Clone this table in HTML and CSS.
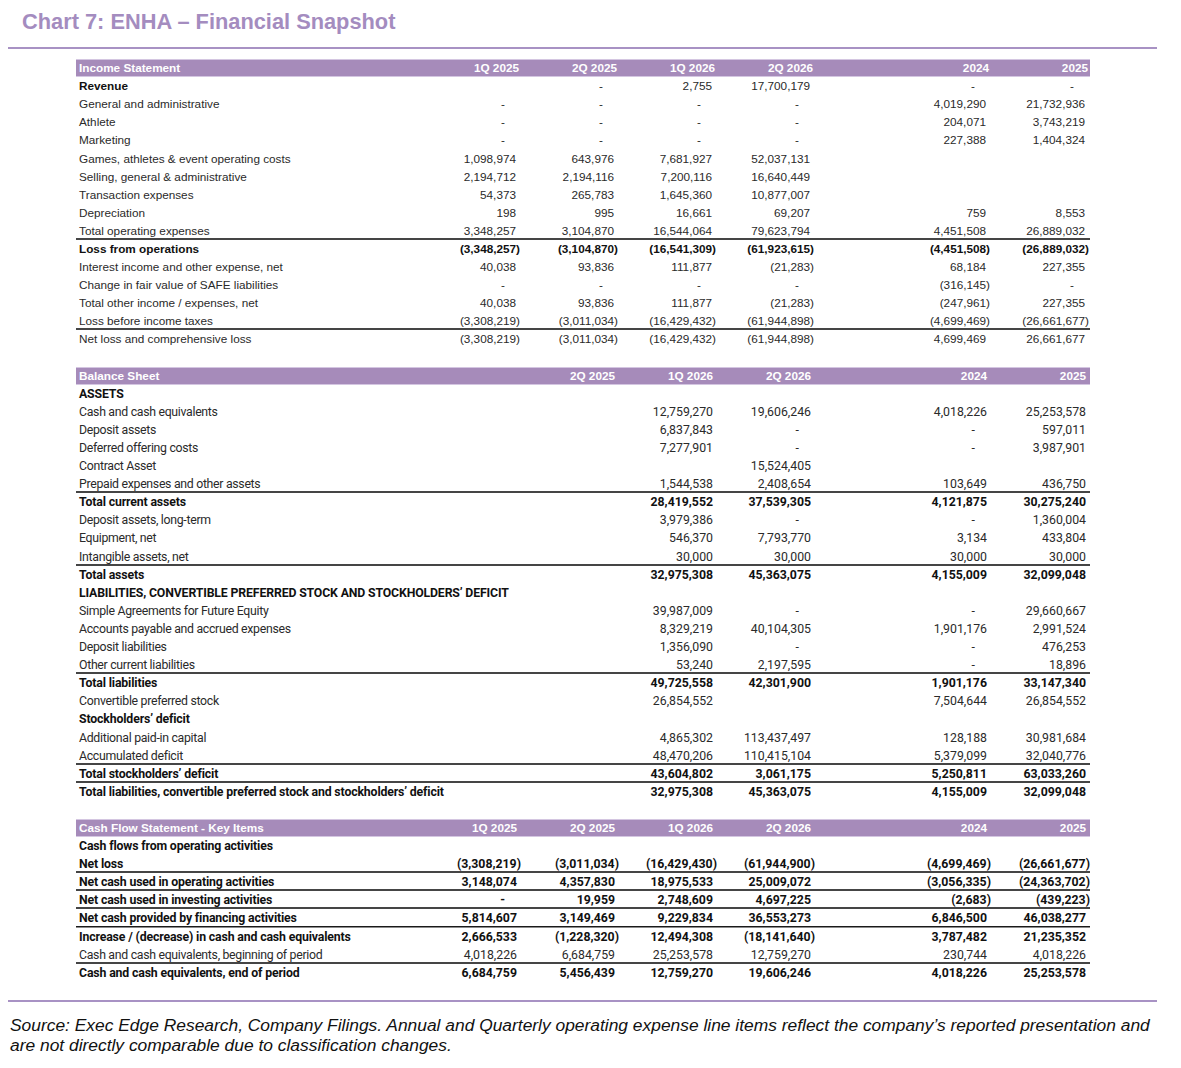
FILE: index.html
```html
<!DOCTYPE html>
<html lang="en">
<head>
<meta charset="utf-8">
<title>Chart 7: ENHA – Financial Snapshot</title>
<link rel="stylesheet" href="styles.css">
</head>
<body>
<div class="page">
  <h1 class="title">Chart 7: ENHA – Financial Snapshot</h1>
  <div class="rule"></div>

  <div class="fin">
    <section class="sect income">
      <div class="row head"><div class="lbl">Income Statement</div><div class="n">1Q 2025</div><div class="n">2Q 2025</div><div class="n">1Q 2026</div><div class="n">2Q 2026</div><div></div><div class="n">2024</div><div class="n">2025</div></div>
      <div class="row"><div class="lbl strong">Revenue</div><div class="n"></div><div class="n z">-</div><div class="n">2,755</div><div class="n">17,700,179</div><div></div><div class="n z">-</div><div class="n z">-</div></div>
      <div class="row"><div class="lbl">General and administrative</div><div class="n z">-</div><div class="n z">-</div><div class="n z">-</div><div class="n z">-</div><div></div><div class="n">4,019,290</div><div class="n">21,732,936</div></div>
      <div class="row"><div class="lbl">Athlete</div><div class="n z">-</div><div class="n z">-</div><div class="n z">-</div><div class="n z">-</div><div></div><div class="n">204,071</div><div class="n">3,743,219</div></div>
      <div class="row"><div class="lbl">Marketing</div><div class="n z">-</div><div class="n z">-</div><div class="n z">-</div><div class="n z">-</div><div></div><div class="n">227,388</div><div class="n">1,404,324</div></div>
      <div class="row"><div class="lbl">Games, athletes &amp; event operating costs</div><div class="n">1,098,974</div><div class="n">643,976</div><div class="n">7,681,927</div><div class="n">52,037,131</div><div></div><div class="n"></div><div class="n"></div></div>
      <div class="row"><div class="lbl">Selling, general &amp; administrative</div><div class="n">2,194,712</div><div class="n">2,194,116</div><div class="n">7,200,116</div><div class="n">16,640,449</div><div></div><div class="n"></div><div class="n"></div></div>
      <div class="row"><div class="lbl">Transaction expenses</div><div class="n">54,373</div><div class="n">265,783</div><div class="n">1,645,360</div><div class="n">10,877,007</div><div></div><div class="n"></div><div class="n"></div></div>
      <div class="row"><div class="lbl">Depreciation</div><div class="n">198</div><div class="n">995</div><div class="n">16,661</div><div class="n">69,207</div><div></div><div class="n">759</div><div class="n">8,553</div></div>
      <div class="row ul"><div class="lbl">Total operating expenses</div><div class="n">3,348,257</div><div class="n">3,104,870</div><div class="n">16,544,064</div><div class="n">79,623,794</div><div></div><div class="n">4,451,508</div><div class="n">26,889,032</div></div>
      <div class="row b"><div class="lbl">Loss from operations</div><div class="n m">(3,348,257)</div><div class="n m">(3,104,870)</div><div class="n m">(16,541,309)</div><div class="n m">(61,923,615)</div><div></div><div class="n m">(4,451,508)</div><div class="n m">(26,889,032)</div></div>
      <div class="row"><div class="lbl">Interest income and other expense, net</div><div class="n">40,038</div><div class="n">93,836</div><div class="n">111,877</div><div class="n m">(21,283)</div><div></div><div class="n">68,184</div><div class="n">227,355</div></div>
      <div class="row"><div class="lbl">Change in fair value of SAFE liabilities</div><div class="n z">-</div><div class="n z">-</div><div class="n z">-</div><div class="n z">-</div><div></div><div class="n m">(316,145)</div><div class="n z">-</div></div>
      <div class="row"><div class="lbl">Total other income / expenses, net</div><div class="n">40,038</div><div class="n">93,836</div><div class="n">111,877</div><div class="n m">(21,283)</div><div></div><div class="n m">(247,961)</div><div class="n">227,355</div></div>
      <div class="row ul"><div class="lbl">Loss before income taxes</div><div class="n m">(3,308,219)</div><div class="n m">(3,011,034)</div><div class="n m">(16,429,432)</div><div class="n m">(61,944,898)</div><div></div><div class="n m">(4,699,469)</div><div class="n m">(26,661,677)</div></div>
      <div class="row"><div class="lbl">Net loss and comprehensive loss</div><div class="n m">(3,308,219)</div><div class="n m">(3,011,034)</div><div class="n m">(16,429,432)</div><div class="n m">(61,944,898)</div><div></div><div class="n">4,699,469</div><div class="n">26,661,677</div></div>
    </section>

    <section class="sect alt">
      <div class="row head"><div class="lbl">Balance Sheet</div><div class="n"></div><div class="n">2Q 2025</div><div class="n">1Q 2026</div><div class="n">2Q 2026</div><div></div><div class="n">2024</div><div class="n">2025</div></div>
      <div class="row b"><div class="lbl">ASSETS</div><div></div><div></div><div></div><div></div><div></div><div></div><div></div></div>
      <div class="row"><div class="lbl">Cash and cash equivalents</div><div></div><div></div><div class="n">12,759,270</div><div class="n">19,606,246</div><div></div><div class="n">4,018,226</div><div class="n">25,253,578</div></div>
      <div class="row"><div class="lbl">Deposit assets</div><div></div><div></div><div class="n">6,837,843</div><div class="n z">-</div><div></div><div class="n z">-</div><div class="n">597,011</div></div>
      <div class="row"><div class="lbl">Deferred offering costs</div><div></div><div></div><div class="n">7,277,901</div><div class="n z">-</div><div></div><div class="n z">-</div><div class="n">3,987,901</div></div>
      <div class="row"><div class="lbl">Contract Asset</div><div></div><div></div><div class="n"></div><div class="n">15,524,405</div><div></div><div class="n"></div><div class="n"></div></div>
      <div class="row ul"><div class="lbl">Prepaid expenses and other assets</div><div></div><div></div><div class="n">1,544,538</div><div class="n">2,408,654</div><div></div><div class="n">103,649</div><div class="n">436,750</div></div>
      <div class="row b"><div class="lbl">Total current assets</div><div></div><div></div><div class="n">28,419,552</div><div class="n">37,539,305</div><div></div><div class="n">4,121,875</div><div class="n">30,275,240</div></div>
      <div class="row"><div class="lbl">Deposit assets, long-term</div><div></div><div></div><div class="n">3,979,386</div><div class="n z">-</div><div></div><div class="n z">-</div><div class="n">1,360,004</div></div>
      <div class="row"><div class="lbl">Equipment, net</div><div></div><div></div><div class="n">546,370</div><div class="n">7,793,770</div><div></div><div class="n">3,134</div><div class="n">433,804</div></div>
      <div class="row ul"><div class="lbl">Intangible assets, net</div><div></div><div></div><div class="n">30,000</div><div class="n">30,000</div><div></div><div class="n">30,000</div><div class="n">30,000</div></div>
      <div class="row b"><div class="lbl">Total assets</div><div></div><div></div><div class="n">32,975,308</div><div class="n">45,363,075</div><div></div><div class="n">4,155,009</div><div class="n">32,099,048</div></div>
      <div class="row b"><div class="lbl">LIABILITIES, CONVERTIBLE PREFERRED STOCK AND STOCKHOLDERS’ DEFICIT</div><div></div><div></div><div></div><div></div><div></div><div></div><div></div></div>
      <div class="row"><div class="lbl">Simple Agreements for Future Equity</div><div></div><div></div><div class="n">39,987,009</div><div class="n z">-</div><div></div><div class="n z">-</div><div class="n">29,660,667</div></div>
      <div class="row"><div class="lbl">Accounts payable and accrued expenses</div><div></div><div></div><div class="n">8,329,219</div><div class="n">40,104,305</div><div></div><div class="n">1,901,176</div><div class="n">2,991,524</div></div>
      <div class="row"><div class="lbl">Deposit liabilities</div><div></div><div></div><div class="n">1,356,090</div><div class="n z">-</div><div></div><div class="n z">-</div><div class="n">476,253</div></div>
      <div class="row ul"><div class="lbl">Other current liabilities</div><div></div><div></div><div class="n">53,240</div><div class="n">2,197,595</div><div></div><div class="n z">-</div><div class="n">18,896</div></div>
      <div class="row b"><div class="lbl">Total liabilities</div><div></div><div></div><div class="n">49,725,558</div><div class="n">42,301,900</div><div></div><div class="n">1,901,176</div><div class="n">33,147,340</div></div>
      <div class="row"><div class="lbl">Convertible preferred stock</div><div></div><div></div><div class="n">26,854,552</div><div class="n"></div><div></div><div class="n">7,504,644</div><div class="n">26,854,552</div></div>
      <div class="row b"><div class="lbl">Stockholders’ deficit</div><div></div><div></div><div></div><div></div><div></div><div></div><div></div></div>
      <div class="row"><div class="lbl">Additional paid-in capital</div><div></div><div></div><div class="n">4,865,302</div><div class="n">113,437,497</div><div></div><div class="n">128,188</div><div class="n">30,981,684</div></div>
      <div class="row ul"><div class="lbl">Accumulated deficit</div><div></div><div></div><div class="n">48,470,206</div><div class="n">110,415,104</div><div></div><div class="n">5,379,099</div><div class="n">32,040,776</div></div>
      <div class="row b ul"><div class="lbl">Total stockholders’ deficit</div><div></div><div></div><div class="n">43,604,802</div><div class="n">3,061,175</div><div></div><div class="n">5,250,811</div><div class="n">63,033,260</div></div>
      <div class="row b"><div class="lbl">Total liabilities, convertible preferred stock and stockholders’ deficit</div><div></div><div></div><div class="n">32,975,308</div><div class="n">45,363,075</div><div></div><div class="n">4,155,009</div><div class="n">32,099,048</div></div>
    </section>

    <section class="sect alt">
      <div class="row head"><div class="lbl">Cash Flow Statement - Key Items</div><div class="n">1Q 2025</div><div class="n">2Q 2025</div><div class="n">1Q 2026</div><div class="n">2Q 2026</div><div></div><div class="n">2024</div><div class="n">2025</div></div>
      <div class="row b"><div class="lbl">Cash flows from operating activities</div><div></div><div></div><div></div><div></div><div></div><div></div><div></div></div>
      <div class="row b ul"><div class="lbl">Net loss</div><div class="n m">(3,308,219)</div><div class="n m">(3,011,034)</div><div class="n m">(16,429,430)</div><div class="n m">(61,944,900)</div><div></div><div class="n m">(4,699,469)</div><div class="n m">(26,661,677)</div></div>
      <div class="row b ul"><div class="lbl">Net cash used in operating activities</div><div class="n">3,148,074</div><div class="n">4,357,830</div><div class="n">18,975,533</div><div class="n">25,009,072</div><div></div><div class="n m">(3,056,335)</div><div class="n m">(24,363,702)</div></div>
      <div class="row b ul"><div class="lbl">Net cash used in investing activities</div><div class="n z">-</div><div class="n">19,959</div><div class="n">2,748,609</div><div class="n">4,697,225</div><div></div><div class="n m">(2,683)</div><div class="n m">(439,223)</div></div>
      <div class="row b ul dark"><div class="lbl">Net cash provided by financing activities</div><div class="n">5,814,607</div><div class="n">3,149,469</div><div class="n">9,229,834</div><div class="n">36,553,273</div><div></div><div class="n">6,846,500</div><div class="n">46,038,277</div></div>
      <div class="row b"><div class="lbl">Increase / (decrease) in cash and cash equivalents</div><div class="n">2,666,533</div><div class="n m">(1,228,320)</div><div class="n">12,494,308</div><div class="n m">(18,141,640)</div><div></div><div class="n">3,787,482</div><div class="n">21,235,352</div></div>
      <div class="row ul"><div class="lbl">Cash and cash equivalents, beginning of period</div><div class="n">4,018,226</div><div class="n">6,684,759</div><div class="n">25,253,578</div><div class="n">12,759,270</div><div></div><div class="n">230,744</div><div class="n">4,018,226</div></div>
      <div class="row b"><div class="lbl">Cash and cash equivalents, end of period</div><div class="n">6,684,759</div><div class="n">5,456,439</div><div class="n">12,759,270</div><div class="n">19,606,246</div><div></div><div class="n">4,018,226</div><div class="n">25,253,578</div></div>
    </section>
  </div>

  <div class="rule rule-foot"></div>
  <p class="source">Source: Exec Edge Research, Company Filings. Annual and Quarterly operating expense line items reflect the company’s reported presentation and<br>are not directly comparable due to classification changes.</p>
</div>
</body>
</html>
```

FILE: styles.css
```css
* {
  box-sizing: border-box;
}

body {
  margin: 0;
  background: #ffffff;
  font-family: "Liberation Sans", Arial, sans-serif;
  color: #262626;
}

.page {
  width: 1181px;
}

.title {
  margin: 0;
  padding: 8px 0 0 22px;
  font-size: 21.8px;
  line-height: 28px;
  font-weight: 700;
  color: #a48cbf;
}

.rule {
  height: 2px;
  margin: 11px 24px 0 8px;
  background: #a892c4;
}

.fin {
  margin: 10px 0 0 76px;
  width: 1014px;
}

.sect + .sect {
  margin-top: 18.1px;
}

.row {
  display: grid;
  grid-template-columns: 347px 98px 98px 98px 98px 78px 98px 99px;
  height: 18.1px;
  align-items: center;
  font-size: 11.75px;
  line-height: 14px;
  color: #2a2a2a;
}

.row > div {
  white-space: nowrap;
}

.lbl {
  padding-left: 3px;
}

.lbl.strong {
  font-weight: 700;
  color: #111111;
}

.n {
  text-align: right;
  padding-right: 5px;
}

.n.m {
  padding-right: 1px;
}

.n.z {
  padding-right: 16px;
}

.row.b {
  font-weight: 700;
  color: #111111;
}

.row.ul {
  background: linear-gradient(#454545, #454545) left bottom / 100% 2px no-repeat;
}

.row.ul.dark {
  background: linear-gradient(#1a1a1a, #1a1a1a) left bottom / 100% 1.5px no-repeat;
}

.row.head {
  background: #a68bba;
  box-shadow: inset 0 1px 0 #d4c6e1, inset 0 -1px 0 #d4c6e1;
  color: #ffffff;
  font-weight: 700;
  font-size: 11.75px;
  font-family: "Liberation Sans", Arial, sans-serif;
}

.row.head .n {
  padding-right: 2px;
}

.alt .row:not(.head) {
  font-family: Roboto, "Liberation Sans", sans-serif;
  font-size: 12.3px;
}

.alt .row:not(.head) .lbl {
  letter-spacing: -0.3px;
}

.alt .row.b .lbl {
  letter-spacing: -0.15px;
}

.alt .row .n {
  padding-right: 4px;
}

.alt .row .n.m {
  padding-right: 0;
}

.alt .row .n.z {
  padding-right: 16px;
}

.rule-foot {
  margin-top: 18px;
}

.source {
  margin: 13px 0 0 0;
  padding-left: 10px;
  font-size: 17.4px;
  line-height: 20px;
  font-style: italic;
  color: #111111;
}
```
